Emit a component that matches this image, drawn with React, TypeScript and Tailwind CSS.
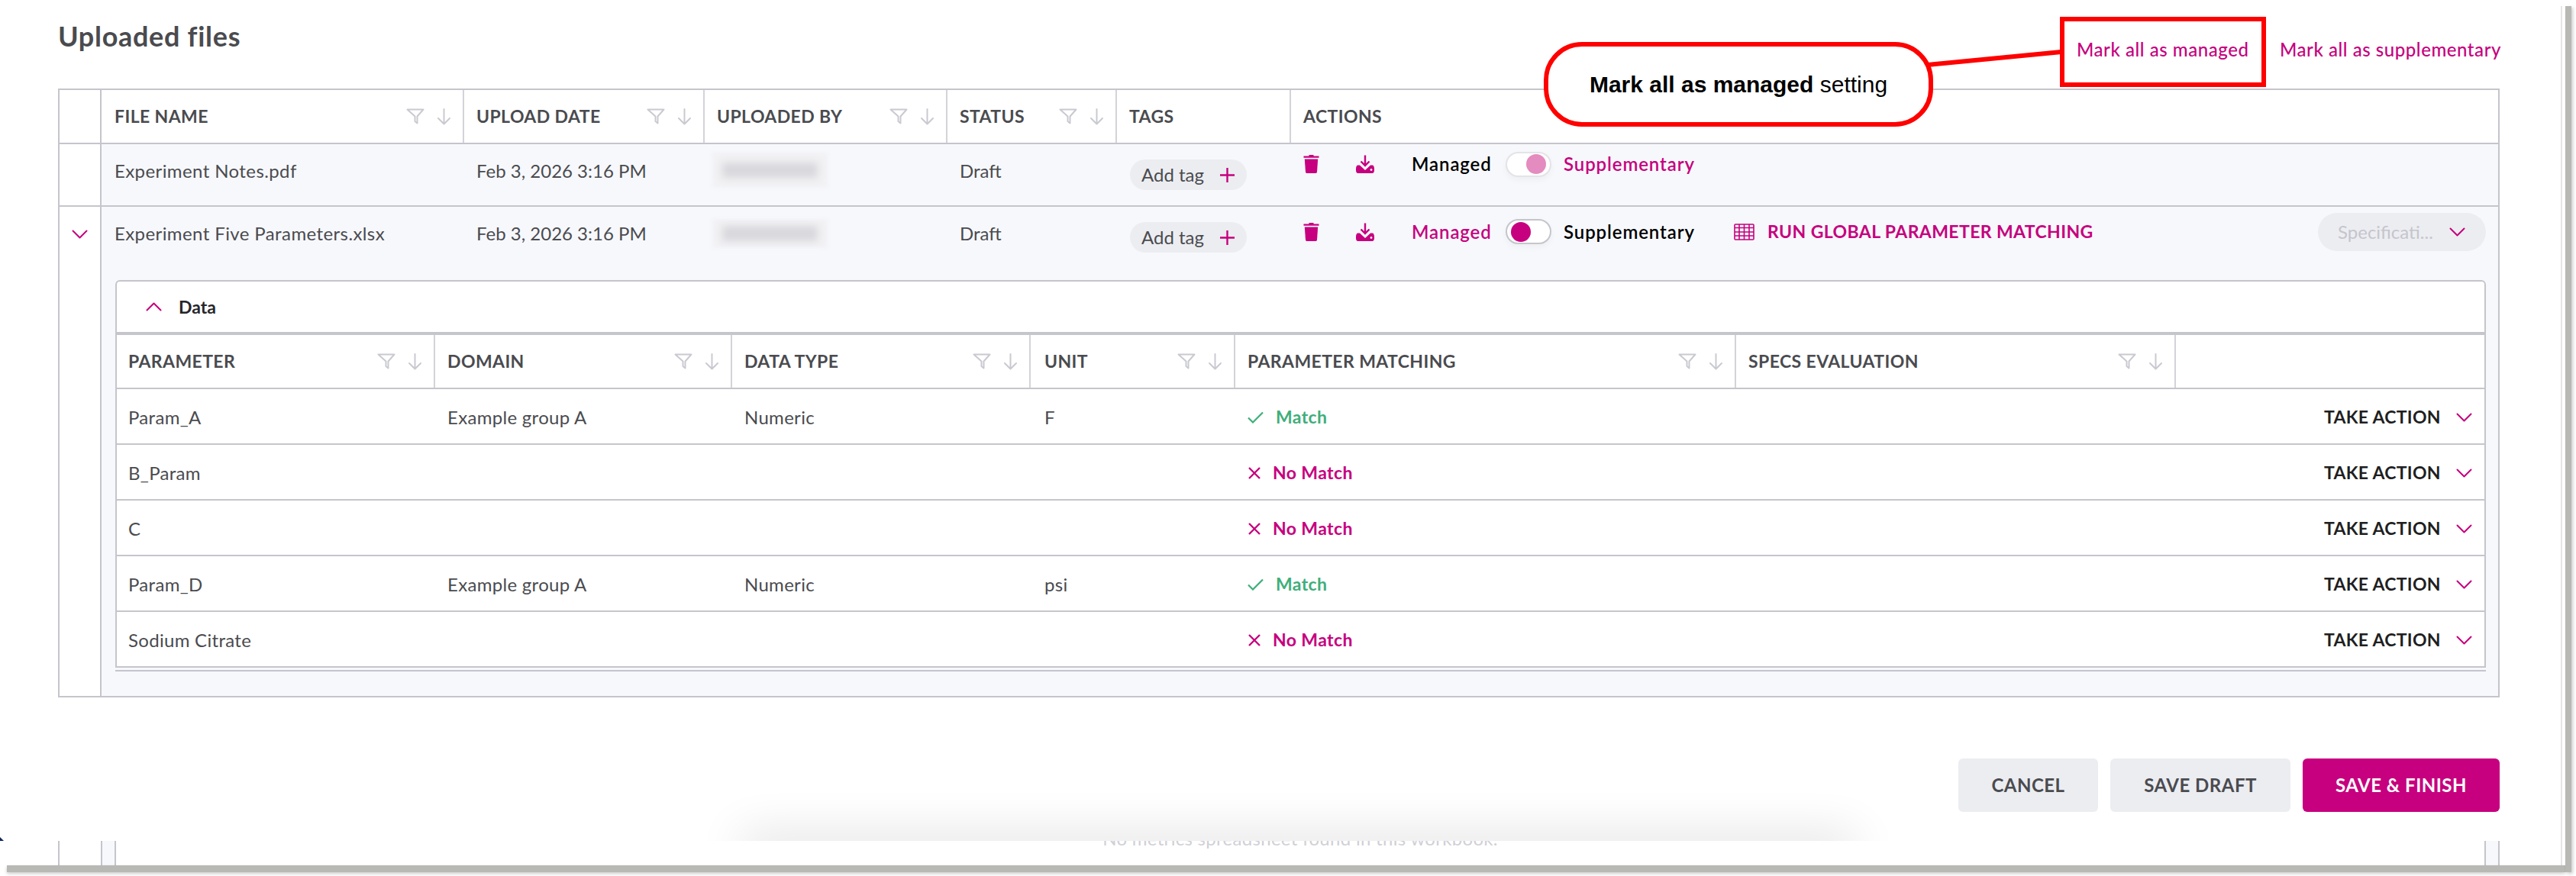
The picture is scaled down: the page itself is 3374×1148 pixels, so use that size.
import React from 'react'

const FONT = "font-['Lato','Noto_Sans',sans-serif]"

function FilterIcon() {
  return (
    <svg width="24" height="21" viewBox="0 0 24 21" fill="none" stroke="#c9cad1" strokeWidth="2" strokeLinejoin="round">
      <path d="M1.5 1.5h21L14.5 10.5v9l-3-2.5v-6.5z" />
    </svg>
  )
}

function SortIcon() {
  return (
    <svg width="19" height="22" viewBox="0 0 19 22" fill="none" stroke="#c9cad1" strokeWidth="2" strokeLinecap="round" strokeLinejoin="round">
      <path d="M9.5 1v19M2 13l7.5 7.5L17 13" />
    </svg>
  )
}

function Chevron({ up, className }: { up?: boolean; className?: string }) {
  return (
    <svg className={className} width="21" height="12" viewBox="0 0 21 12" fill="none" stroke="#c6007e" strokeWidth="2" strokeLinecap="round" strokeLinejoin="round">
      <path d={up ? 'M1.5 10.5L10.5 1.5l9 9' : 'M1.5 1.5l9 9 9-9'} />
    </svg>
  )
}

function TrashIcon() {
  return (
    <svg width="21" height="24" viewBox="0 0 21 24" fill="#c6007e" className="shrink-0">
      <path d="M7.5 0h6v1.6h7v2.2H.5V1.6h7z" />
      <path d="M1.8 5.4h17.4L18 22.2c-.1 1-.8 1.8-1.9 1.8H4.9c-1.1 0-1.8-.8-1.9-1.8z" />
    </svg>
  )
}

function DownloadIcon() {
  return (
    <svg width="24" height="24" viewBox="0 0 24 24" className="shrink-0">
      <path d="M12 0.5v13M6.5 8.5l5.5 5.5 5.5-5.5" fill="none" stroke="#c6007e" strokeWidth="2.4" />
      <path d="M5 13.5l7 6.5 7-6.5h2.5c1.4 0 2.5 1.4 2.5 5v1.5c0 2.5-1.1 4-2.5 4h-19C1.1 24 0 22.5 0 20v-1.5c0-3.6 1.1-5 2.5-5z" fill="#c6007e" />
      <circle cx="20" cy="19.5" r="1.4" fill="#f7f8fc" />
    </svg>
  )
}

function GridIcon() {
  return (
    <svg width="27" height="22" viewBox="0 0 27 22" fill="none" stroke="#c6007e" strokeWidth="1.6" className="shrink-0">
      <rect x="1" y="1" width="25" height="20" rx="1" />
      <path d="M1 5.5h25M1 11h25M1 16h25M7 1v20M13.5 1v20M20 1v20" />
    </svg>
  )
}

function Toggle({ on }: { on?: boolean }) {
  return (
    <div className={`flex h-[33px] w-[60px] shrink-0 items-center rounded-full border-2 bg-white px-[5px] shadow-[0_4px_8px_rgba(0,0,0,0.04)] ${on ? 'justify-start border-[#c5c5cc]' : 'justify-end border-[#e3e3e8]'}`}>
      <div className={`h-[26px] w-[26px] rounded-full ${on ? 'bg-[#c6007e]' : 'bg-[#e48bbf]'}`} />
    </div>
  )
}

function HeadCell({ label, className, labelClass = '', icons = true }: { label: string; className: string; labelClass?: string; icons?: boolean }) {
  return (
    <div className={`flex shrink-0 items-center border-r-2 border-[#d3d3d9] pr-[15px] ${className}`}>
      <span className={`flex-1 whitespace-nowrap text-[23px] font-bold tracking-[0.4px] text-[#4a4b4f] ${labelClass}`}>{label}</span>
      {icons && (
        <div className="flex items-center gap-[16px]">
          <FilterIcon />
          <SortIcon />
        </div>
      )}
    </div>
  )
}

function Blurred({ className }: { className: string }) {
  return (
    <div className={`flex items-center justify-center bg-[#f2f2f5] blur-[2px] ${className}`}>
      <div className="h-[20px] w-[125px] bg-[#d8d8dc] blur-[5px]" />
    </div>
  )
}

function AddTag() {
  return (
    <div className="flex h-10 w-[153px] items-center rounded-full bg-[#ecedf1] pl-[15px]">
      <span className="w-[103px] whitespace-nowrap text-[24px] text-[#4a4b4f]">Add tag</span>
      <svg width="19" height="19" viewBox="0 0 19 19" stroke="#c6007e" strokeWidth="2.4">
        <path d="M9.5 0v19M0 9.5h19" />
      </svg>
    </div>
  )
}

function FileRowCells({ name, blurClass }: { name: string; blurClass: string }) {
  return (
    <>
      <div className="w-[475px] shrink-0 pl-[17px] pt-5 text-[24px] leading-[30px] tracking-[0.4px] text-[#4a4b4f]">{name}</div>
      <div className="w-[315px] shrink-0 pl-4 pt-5 text-[24px] leading-[30px] text-[#4a4b4f]">Feb 3, 2026 3:16 PM</div>
      <div className="w-[318px] shrink-0 pl-[10px]">
        <Blurred className={blurClass} />
      </div>
      <div className="w-[222px] shrink-0 pl-4 pt-5 text-[24px] leading-[30px] text-[#4a4b4f]">Draft</div>
      <div className="w-[228px] shrink-0 pl-[17px] pt-5">
        <AddTag />
      </div>
    </>
  )
}

type ParamRow = { name: string; domain?: string; type?: string; unit?: string; match: boolean }

const paramRows: ParamRow[] = [
  { name: 'Param_A', domain: 'Example group A', type: 'Numeric', unit: 'F', match: true },
  { name: 'B_Param', match: false },
  { name: 'C', match: false },
  { name: 'Param_D', domain: 'Example group A', type: 'Numeric', unit: 'psi', match: true },
  { name: 'Sodium Citrate', match: false },
]

function ParamTableRow({ row }: { row: ParamRow }) {
  return (
    <div className="flex h-[73px] items-center border-b-2 border-[#c5c5cc] bg-white pt-[2px] text-[24px] tracking-[0.3px] text-[#4a4b4f]">
      <div className="w-[417px] shrink-0 pl-[15px]">{row.name}</div>
      <div className="w-[389px] shrink-0 pl-4">{row.domain}</div>
      <div className="w-[391px] shrink-0 pl-4">{row.type}</div>
      <div className="w-[268px] shrink-0 pl-[18px]">{row.unit}</div>
      <div className="flex flex-1 items-center pl-4">
        {row.match ? (
          <>
            <svg width="21" height="16" viewBox="0 0 21 16" fill="none" stroke="#3fae7a" strokeWidth="2.2" className="shrink-0">
              <path d="M1 8.5L7 14.5 20 1.5" />
            </svg>
            <span className="ml-4 text-[23px] font-bold tracking-[0.4px] text-[#3fae7a]">Match</span>
          </>
        ) : (
          <>
            <svg width="18" height="18" viewBox="0 0 18 18" fill="none" stroke="#c6007e" strokeWidth="2.4" className="shrink-0">
              <path d="M2 2l14 14M16 2L2 16" />
            </svg>
            <span className="ml-[15px] text-[23px] font-bold tracking-[0.4px] text-[#c6007e]">No Match</span>
          </>
        )}
      </div>
      <div className="flex w-[210px] shrink-0 items-center">
        <span className="w-[173px] whitespace-nowrap text-[23px] font-bold tracking-[0.3px] text-[#1f1f22]">TAKE ACTION</span>
        <Chevron />
      </div>
    </div>
  )
}

export default function App() {
  return (
    <div className={`relative h-[1148px] w-[3374px] overflow-hidden bg-white ${FONT}`}>
      {/* Window */}
      <div className="flex h-[1134px] w-[3359px] flex-col">
        {/* Title row */}
        <div className="flex h-[116px] shrink-0 pl-[76px]">
          <h1 className="flex-1 pt-[27px] text-[36px] font-bold leading-[40px] tracking-[0.7px] text-[#4a4b4f]">Uploaded files</h1>
          <div className="flex items-start pr-[85px] pt-[50px] text-[24px] font-medium leading-[30px] tracking-[0.55px] text-[#c6007e]">
            <span className="w-[266px] whitespace-nowrap">Mark all as managed</span>
            <span className="w-[288px] whitespace-nowrap">Mark all as supplementary</span>
          </div>
        </div>

        {/* Files table */}
        <div className="ml-[76px] flex w-[3198px] shrink-0 flex-col border-x-2 border-b-2 border-t-2 border-[#c5c5cc]">
          <div className="flex h-[71px] border-b-2 border-[#c5c5cc] bg-white">
            <div className="w-[55px] shrink-0 border-r-2 border-[#c5c5cc]" />
            <HeadCell label="FILE NAME" className="w-[475px]" labelClass="pl-[17px]" />
            <HeadCell label="UPLOAD DATE" className="w-[315px]" labelClass="pl-4" />
            <HeadCell label="UPLOADED BY" className="w-[318px]" labelClass="pl-4" />
            <HeadCell label="STATUS" className="w-[222px]" labelClass="pl-4" />
            <HeadCell label="TAGS" className="w-[228px]" labelClass="pl-4" icons={false} />
            <div className="flex flex-1 items-center pl-4 text-[23px] font-bold tracking-[0.4px] text-[#4a4b4f]">ACTIONS</div>
          </div>

          {/* Draft pdf row */}
          <div className="flex h-[82px] border-b-2 border-[#c5c5cc]">
            <div className="w-[55px] shrink-0 border-r-2 border-[#c5c5cc] bg-white" />
            <div className="flex flex-1 bg-[#f7f8fc]">
              <FileRowCells name="Experiment Notes.pdf" blurClass="mt-[11px] h-[46px] w-[151px]" />
              <div className="flex flex-1 items-center self-start pl-4 pt-2">
                <TrashIcon />
                <div className="ml-12"><DownloadIcon /></div>
                <span className="ml-[49px] w-[123px] text-[24px] font-semibold tracking-[0.9px] text-black">Managed</span>
                <Toggle />
                <span className="ml-4 whitespace-nowrap text-[24px] font-semibold tracking-[0.9px] text-[#c6007e]">Supplementary</span>
              </div>
            </div>
          </div>

          {/* Expanded xlsx row */}
          <div className="flex h-[641px]">
            <div className="flex w-[55px] shrink-0 justify-center border-r-2 border-[#c5c5cc] bg-white pt-[30px]">
              <Chevron />
            </div>
            <div className="flex flex-1 flex-col bg-[#f7f8fc]">
              <div className="flex h-[96px] shrink-0">
                <FileRowCells name="Experiment Five Parameters.xlsx" blurClass="mt-[16px] h-[38px] w-[151px]" />
                <div className="flex flex-1 items-start pl-4 pr-4 pt-4">
                  <div className="flex h-[33px] items-center">
                    <TrashIcon />
                    <div className="ml-12"><DownloadIcon /></div>
                    <span className="ml-[49px] w-[123px] text-[24px] font-semibold tracking-[0.9px] text-[#c6007e]">Managed</span>
                    <Toggle on />
                    <span className="ml-4 w-[174px] whitespace-nowrap text-[24px] font-semibold tracking-[0.9px] text-black">Supplementary</span>
                    <div className="ml-[49px]"><GridIcon /></div>
                    <span className="ml-[17px] whitespace-nowrap text-[23px] font-bold tracking-[0.4px] text-[#c6007e]">RUN GLOBAL PARAMETER MATCHING</span>
                  </div>
                  <div className="-mt-2 ml-auto flex h-[50px] w-[220px] items-center rounded-full bg-[#ecedf1] pl-[26px]">
                    <span className="w-[146px] whitespace-nowrap text-[24px] text-[#c5c5cc]">Specificati...</span>
                    <Chevron />
                  </div>
                </div>
              </div>

              {/* Nested data table */}
              <div className="ml-[18px] mr-[16px]">
                <div className="flex h-[72px] items-center rounded-t-md border-x-2 border-b-4 border-t-2 border-[#c5c5cc] bg-white pl-[38px]">
                  <Chevron up />
                  <span className="ml-[22px] text-[23px] font-bold text-[#26262a]">Data</span>
                </div>
                <div className="border-x-2 border-[#c5c5cc]">
                  <div className="flex h-[71px] border-b-2 border-[#c5c5cc] bg-white">
                    <HeadCell label="PARAMETER" className="w-[417px]" labelClass="pl-[15px]" />
                    <HeadCell label="DOMAIN" className="w-[389px]" labelClass="pl-4" />
                    <HeadCell label="DATA TYPE" className="w-[391px]" labelClass="pl-4" />
                    <HeadCell label="UNIT" className="w-[268px]" labelClass="pl-[18px]" />
                    <HeadCell label="PARAMETER MATCHING" className="w-[656px]" labelClass="pl-4" />
                    <HeadCell label="SPECS EVALUATION" className="w-[576px]" labelClass="pl-4" />
                    <div className="flex-1" />
                  </div>
                  {paramRows.map((row) => (
                    <ParamTableRow key={row.name} row={row} />
                  ))}
                </div>
                <div className="mt-[3px] h-[2px] bg-[#c5c5cc]" />
              </div>
            </div>
          </div>
        </div>

        {/* Footer buttons */}
        <div className="flex shrink-0 justify-end gap-4 pr-[85px] pt-[80px] text-[24px] font-bold tracking-[0.5px]">
          <div className="flex h-[70px] w-[183px] items-center justify-center rounded-md bg-[#ecedf1] text-[#4a4b4f]">CANCEL</div>
          <div className="flex h-[70px] w-[236px] items-center justify-center rounded-md bg-[#ecedf1] text-[#4a4b4f]">SAVE DRAFT</div>
          <div className="flex h-[70px] w-[258px] items-center justify-center rounded-md bg-[#c6007e] text-white">SAVE &amp; FINISH</div>
        </div>

        {/* Page underneath, peeking out below the dialog */}
        <div className="mt-[38px] flex min-h-0 flex-1 pl-[76px] pr-[85px]">
          <div className="flex flex-1 border-x-2 border-[#c5c5cc]">
            <div className="w-[54px] shrink-0" />
            <div className="flex flex-1 border-l-2 border-[#c5c5cc] bg-[#f7f8fc] pl-4 pr-4">
              <div className="flex flex-1 justify-center overflow-hidden border-x-2 border-[#c5c5cc] bg-white">
                <span className="-mt-[15px] whitespace-nowrap text-[24px] leading-[24px] tracking-[0.3px] text-[#d0d0d6]">No metrics spreadsheet found in this workbook.</span>
              </div>
            </div>
          </div>
        </div>
      </div>

      {/* Window shadow */}
      <div className="absolute left-[3354px] top-[8px] h-[1126px] w-[2px] bg-[#e5e5e5]" />
      <div className="absolute left-[9px] top-[1134px] h-[9px] w-[3351px] bg-[#b8b8b5] shadow-[0_2px_4px_rgba(0,0,0,0.2)]" />
      <div className="absolute left-[3360px] top-[8px] h-[1135px] w-[8px] bg-[#b8b8b5] shadow-[2px_2px_4px_rgba(0,0,0,0.2)]" />

      {/* Stray mark at the left edge */}
      <svg className="absolute left-0 top-[1097px]" width="5" height="5" viewBox="0 0 5 5" fill="#10285e">
        <path d="M0 0l5 5H0z" />
      </svg>

      {/* Dialog shadow falling on the page below */}
      <div className="absolute left-[880px] top-[1030px] h-[72px] w-[1640px] overflow-hidden">
        <div className="mx-auto mt-[72px] h-5 w-[1440px] shadow-[0_0_60px_10px_rgba(0,0,0,0.12)]" />
      </div>

      {/* Annotation */}
      <svg className="absolute left-[2520px] top-[60px]" width="185" height="32" viewBox="0 0 185 32" fill="none" stroke="#ff0000" strokeWidth="6">
        <path d="M5 25L180 8" />
      </svg>
      <div className="absolute left-[2698px] top-[22px] h-[92px] w-[270px] border-[6px] border-[#ff0000]" />
      <div className="absolute left-[2022px] top-[55px] flex h-[111px] w-[510px] items-center justify-center rounded-[50px] border-[6px] border-[#ff0000] bg-white font-['Liberation_Sans',sans-serif] text-[30px] text-black">
        <span className="whitespace-nowrap"><b>Mark all as managed</b> setting</span>
      </div>
    </div>
  )
}
